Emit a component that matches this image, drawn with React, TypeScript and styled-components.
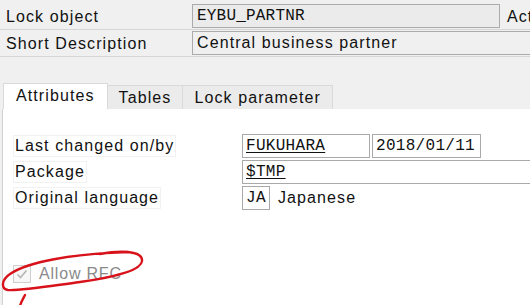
import styled, { createGlobalStyle } from "styled-components";

const GlobalStyle = createGlobalStyle`
  html, body {
    margin: 0;
    padding: 0;
    background: #f0f0f0;
  }
`;

const Screen = styled.div`
  position: relative;
  width: 530px;
  height: 305px;
  overflow: hidden;
  background: #f0f0f0;
  font-family: "Liberation Sans", Arial, sans-serif;
  font-size: 16px;
  letter-spacing: 1.1px;
  color: #111;
  display: flex;
  flex-direction: column;
`;

const Header = styled.div`
  display: flex;
  flex-direction: column;
  padding-top: 4px;
`;

const HeaderRow = styled.div`
  display: flex;
  align-items: stretch;
  height: 25px;
  border-bottom: 1px solid #d6d6d6;
  & + & {
    margin-top: 1px;
  }
`;

const HeaderLabel = styled.div`
  width: 186px;
  padding-left: 6px;
  display: flex;
  align-items: center;
  flex-shrink: 0;
`;

const HeaderField = styled.div<{ $width?: number; $filled?: boolean }>`
  box-sizing: border-box;
  width: ${(p) => (p.$width ? `${p.$width}px` : "auto")};
  flex: ${(p) => (p.$width ? "0 0 auto" : "1 0 auto")};
  margin-right: ${(p) => (p.$width ? "0" : "-4px")};
  height: 24px;
  border: 1px solid #ababab;
  background: ${(p) => (p.$filled ? "#ebebeb" : "#f0f0f0")};
  padding-left: 4px;
  display: flex;
  align-items: center;
  font-family: ${(p) =>
    p.$filled ? `"Liberation Mono", monospace` : "inherit"};
  letter-spacing: ${(p) => (p.$filled ? "0.2px" : "inherit")};
`;

const Trailing = styled.div`
  padding-left: 7px;
  display: flex;
  align-items: center;
  white-space: nowrap;
`;

const TabBar = styled.div`
  display: flex;
  align-items: flex-end;
  margin-top: 26px;
  padding-left: 3px;
  height: 26px;
`;

const Tab = styled.div<{ $active?: boolean }>`
  box-sizing: border-box;
  height: ${(p) => (p.$active ? "26px" : "24px")};
  padding: 0 ${(p) => (p.$active ? "12px" : "11px")};
  display: flex;
  align-items: center;
  background: ${(p) => (p.$active ? "#ffffff" : "#ebebeb")};
  border: 1px solid #d9d9d9;
  border-bottom: none;
  border-left: ${(p) => (p.$active ? "1px solid #d9d9d9" : "none")};
  padding-bottom: ${(p) => (p.$active ? "2px" : "0")};
`;

const Panel = styled.div`
  flex: 1;
  margin-left: 2px;
  background: #ffffff;
  border-left: 1px solid #d3d3d3;
  padding: 25px 0 0 10px;
  display: flex;
  flex-direction: column;
`;

const AttrRow = styled.div`
  display: flex;
  align-items: center;
  height: 24px;
  & + & {
    margin-top: 2px;
  }
`;

const AttrLabelCell = styled.div`
  width: 229px;
  flex-shrink: 0;
  display: flex;
`;

const AttrLabel = styled.span`
  border: 1px solid #f1f1f1;
  padding: 0 1px;
  line-height: 20px;
`;

const ValueBox = styled.div<{ $width?: number }>`
  box-sizing: border-box;
  height: 24px;
  width: ${(p) => (p.$width ? `${p.$width}px` : "auto")};
  flex: ${(p) => (p.$width ? "0 0 auto" : "1 0 auto")};
  margin-right: ${(p) => (p.$width ? "2px" : "-4px")};
  border: 1px solid #a9a9a9;
  padding-left: 3px;
  display: flex;
  align-items: center;
  font-family: "Liberation Mono", monospace;
  letter-spacing: 0.3px;
`;

const LinkText = styled.span`
  text-decoration: underline;
  text-underline-offset: 2px;
`;

const PlainText = styled.span`
  padding-left: 6px;
`;

const CheckRow = styled.div`
  display: flex;
  align-items: center;
  margin-top: 55px;
  color: #8a8a8a;
  font-size: 16px;
  letter-spacing: 0.8px;
`;

const CheckBox = styled.div`
  box-sizing: border-box;
  width: 18px;
  height: 18px;
  border: 1px solid #cfcfcf;
  background: #f7f7f7;
  display: flex;
  align-items: center;
  justify-content: center;
  margin-right: 8px;
`;

const Scribble = styled.svg`
  position: absolute;
  left: 0;
  top: 245px;
  pointer-events: none;
`;

export default function App() {
  return (
    <>
      <GlobalStyle />
      <Screen>
        <Header>
          <HeaderRow>
            <HeaderLabel>Lock object</HeaderLabel>
            <HeaderField $width={308} $filled>
              EYBU_PARTNR
            </HeaderField>
            <Trailing>Active</Trailing>
          </HeaderRow>
          <HeaderRow>
            <HeaderLabel>Short Description</HeaderLabel>
            <HeaderField>Central business partner</HeaderField>
          </HeaderRow>
        </Header>

        <TabBar>
          <Tab $active>Attributes</Tab>
          <Tab>Tables</Tab>
          <Tab>Lock parameter</Tab>
        </TabBar>

        <Panel>
          <AttrRow>
            <AttrLabelCell>
              <AttrLabel>Last changed on/by</AttrLabel>
            </AttrLabelCell>
            <ValueBox $width={128}>
              <LinkText>FUKUHARA</LinkText>
            </ValueBox>
            <ValueBox $width={109}>2018/01/11</ValueBox>
          </AttrRow>
          <AttrRow>
            <AttrLabelCell>
              <AttrLabel>Package</AttrLabel>
            </AttrLabelCell>
            <ValueBox>
              <LinkText>$TMP</LinkText>
            </ValueBox>
          </AttrRow>
          <AttrRow>
            <AttrLabelCell>
              <AttrLabel>Original language</AttrLabel>
            </AttrLabelCell>
            <ValueBox $width={28}>JA</ValueBox>
            <PlainText>Japanese</PlainText>
          </AttrRow>

          <CheckRow>
            <CheckBox>
              <svg width="14" height="14" viewBox="0 0 14 14">
                <path
                  d="M2.5 7.5 L5.5 10.5 L11.5 3.5"
                  fill="none"
                  stroke="#b5b5b5"
                  strokeWidth="1.6"
                />
              </svg>
            </CheckBox>
            Allow RFC
          </CheckRow>
        </Panel>

        <Scribble width="160" height="60" viewBox="0 0 160 60">
          <path
            d="M100 9 C122 5, 143 6, 142 16 C141 26, 110 33, 80 37 C50 41, 20 46, 8 45 C1 44, 1 35, 10 29 C28 17, 70 9, 128 7"
            fill="none"
            stroke="#d8121a"
            strokeWidth="2.4"
            strokeLinecap="round"
          />
          <path
            d="M25 50 C23 54, 21 57, 20 61"
            fill="none"
            stroke="#d8121a"
            strokeWidth="2.4"
            strokeLinecap="round"
          />
        </Scribble>
      </Screen>
    </>
  );
}
